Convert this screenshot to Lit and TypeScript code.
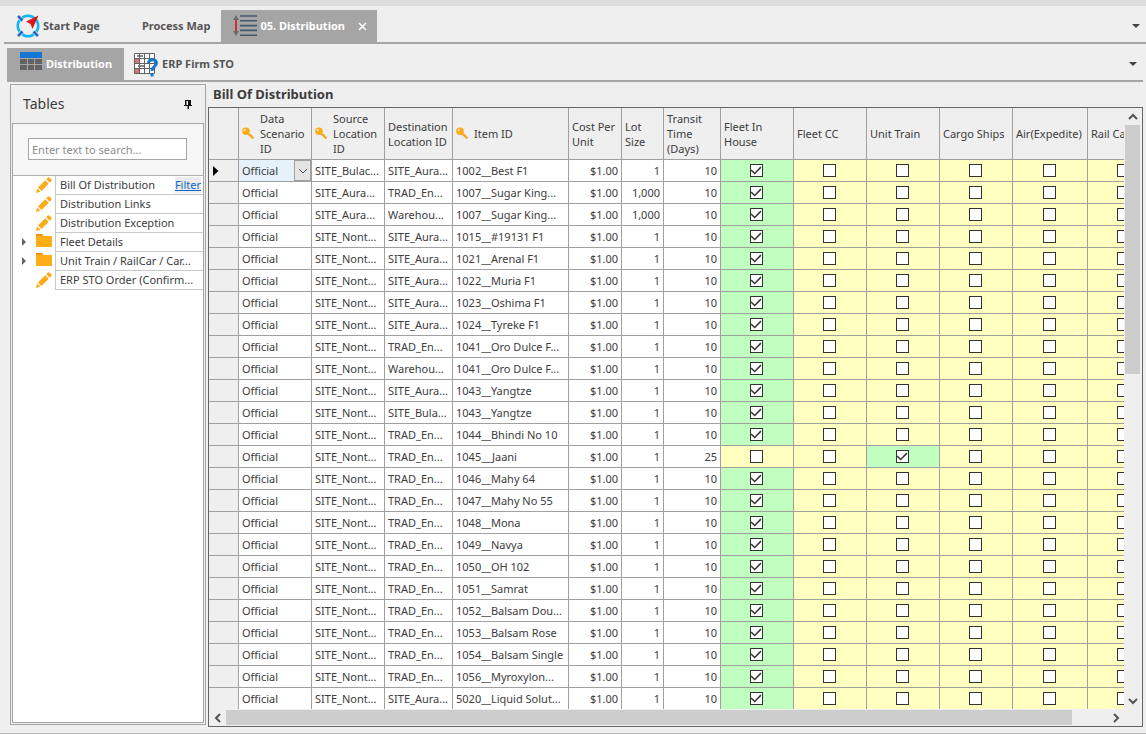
import { LitElement, css, html, nothing, svg } from 'lit';
import { customElement, property } from 'lit/decorators.js';
import { classMap } from 'lit/directives/class-map.js';

interface Column {
  label: string;
  width: number;
  key?: boolean;
}

interface Row {
  source: string;
  destination: string;
  item: string;
  lot: string;
  days: number;
  mode: number;
}

const COLUMNS: Column[] = [
  { label: 'Data Scenario ID', width: 73, key: true },
  { label: 'Source Location ID', width: 73, key: true },
  { label: 'Destination Location ID', width: 68 },
  { label: 'Item ID', width: 116, key: true },
  { label: 'Cost Per Unit', width: 53 },
  { label: 'Lot Size', width: 42 },
  { label: 'Transit Time (Days)', width: 57 },
  { label: 'Fleet In House', width: 73 },
  { label: 'Fleet CC', width: 73 },
  { label: 'Unit Train', width: 73 },
  { label: 'Cargo Ships', width: 73 },
  { label: 'Air(Expedite)', width: 75 },
  { label: 'Rail Ca', width: 73 },
];

const MODES = COLUMNS.slice(7).map((c) => c.label);

const row = (
  source: string,
  destination: string,
  item: string,
  lot = '1',
  days = 10,
  mode = 0,
): Row => ({ source, destination, item, lot, days, mode });

const NONT = 'SITE_Nont...';
const AURA = 'SITE_Aura...';
const TRAD = 'TRAD_En...';
const WARE = 'Warehou...';

const ROWS: Row[] = [
  row('SITE_Bulac...', AURA, '1002__Best F1'),
  row(AURA, TRAD, '1007__Sugar King...', '1,000'),
  row(AURA, WARE, '1007__Sugar King...', '1,000'),
  row(NONT, AURA, '1015__#19131 F1'),
  row(NONT, AURA, '1021__Arenal F1'),
  row(NONT, AURA, '1022__Muria F1'),
  row(NONT, AURA, '1023__Oshima F1'),
  row(NONT, AURA, '1024__Tyreke F1'),
  row(NONT, TRAD, '1041__Oro Dulce F...'),
  row(NONT, WARE, '1041__Oro Dulce F...'),
  row(NONT, AURA, '1043__Yangtze'),
  row(NONT, 'SITE_Bula...', '1043__Yangtze'),
  row(NONT, TRAD, '1044__Bhindi No 10'),
  row(NONT, TRAD, '1045__Jaani', '1', 25, 2),
  row(NONT, TRAD, '1046__Mahy 64'),
  row(NONT, TRAD, '1047__Mahy No 55'),
  row(NONT, TRAD, '1048__Mona'),
  row(NONT, TRAD, '1049__Navya'),
  row(NONT, TRAD, '1050__OH 102'),
  row(NONT, TRAD, '1051__Samrat'),
  row(NONT, TRAD, '1052__Balsam Dou...'),
  row(NONT, TRAD, '1053__Balsam Rose'),
  row(NONT, TRAD, '1054__Balsam Single'),
  row(NONT, TRAD, '1056__Myroxylon...'),
  row(NONT, AURA, '5020__Liquid Solut...'),
];

const TREE = [
  { label: 'Bill Of Distribution', folder: false, filter: true },
  { label: 'Distribution Links', folder: false },
  { label: 'Distribution Exception', folder: false },
  { label: 'Fleet Details', folder: true },
  { label: 'Unit Train / RailCar / Car...', folder: true },
  { label: 'ERP STO Order (Confirm...', folder: false },
];

const compassIcon = html`
  <svg width="24" height="26" viewBox="0 0 24 26">
    <circle cx="12" cy="13" r="10.200" fill="none" stroke="#12b5f5" stroke-width="2.600" />
    <path d="M2 3l3.500 3.500M2 23l3.500-3.500M22 23l-3.500-3.500" stroke="#efefef" stroke-width="4" />
    <path d="M2 3l4.500 4.500M2 23l4.500-4.500M22 23l-4.500-4.500" stroke="#2467c4" stroke-width="2.600" />
    <path d="M22.500 2.500L10 8.500l4.500 2.500 2 5z" fill="#d8161c" />
  </svg>
`;

const linesIcon = html`
  <svg width="24" height="24" viewBox="0 0 24 24">
    <path d="M3 6v12" stroke="#d03030" stroke-width="2" />
    <path d="M3 1l3 5H0zM3 22l3-5H0z" fill="#6b6b6b" />
    <path
      d="M7 2h17M7 6.800h17M7 11.600h17M7 16.400h17M7 21.200h17"
      stroke="#41586d"
      stroke-width="1.600"
    />
  </svg>
`;

const gridIcon = html`
  <svg width="22" height="26" viewBox="0 0 22 26">
    <path d="M0 1h22v6H0z" fill="#1478d4" />
    <path
      d="M0 8h7v5H0zM8 8h6v5H8zM15 8h7v5h-7zM0 14h7v5H0zM8 14h6v5H8zM15 14h7v5h-7z"
      fill="#636363"
    />
  </svg>
`;

const questionGridIcon = html`
  <svg width="24" height="26" viewBox="0 0 24 26">
    <path d="M.5 2.500h20v20H.5z" fill="#fff" />
    <path d="M.5 7.500h5v5h-5zM.5 17.500h5v5h-5z" fill="#dc7474" />
    <path
      d="M.5 2.500h20v20H.5zM5.500 2.500v20M10.500 2.500v20M15.500 2.500v20M.5 7.500h20M.5 12.500h20M.5 17.500h20"
      fill="none"
      stroke="#626262"
    />
    <path d="M3 5h6M4 15h6" stroke="#666" stroke-width="1.600" />
    <path
      d="M14.500 12c0-4.500 8-4.500 8 0 0 3.500-4.500 3.500-4.500 8"
      fill="none"
      stroke="#1478d4"
      stroke-width="3"
    />
    <path d="M16.500 22.500h3v3h-3z" fill="#1478d4" />
  </svg>
`;

const keyIcon = html`
  <svg class="key" width="13" height="13" viewBox="0 0 13 13">
    <path d="M5.500 6l6 5.500M8 9.300l1.500-1.500" stroke="#f5a51b" stroke-width="2.200" />
    <circle cx="4" cy="4.200" r="3.800" fill="#fbab18" />
    <circle cx="2.800" cy="3" r="1" fill="#fff0d0" />
  </svg>
`;

const pencilIcon = html`
  <svg width="16" height="16" viewBox="0 0 16 16" fill="#fbab18">
    <path d="M0 16l1.200-4.500 3.300 3.300z" />
    <path d="M2 10.500l7.200-7.200 3.500 3.500L5.500 14z" />
    <path d="M10.200 2.300l1.500-1.500q1-1 2 0l1.500 1.500q1 1 0 2l-1.500 1.500z" />
  </svg>
`;

const folderIcon = html`
  <svg width="16" height="16" viewBox="0 0 16 16">
    <path d="M0 0h6l1.500 2H16v11H0z" fill="#ffae17" />
    <path d="M0 0h6l1 1.500H0z" fill="#f28a11" />
  </svg>
`;

const pinIcon = html`
  <svg width="8" height="9" viewBox="0 0 8 9">
    <path d="M1 0h6v5h1v1H5v3H3.500V6H0V5h1z" fill="#111" />
    <path d="M2.500 1h1.500v4H2.500z" fill="#efefef" />
  </svg>
`;

const chevrons = {
  up: svg`<path d="M1 7l4-4 4 4" />`,
  down: svg`<path d="M1 3l4 4 4-4" />`,
  left: svg`<path d="M7 1L3 5l4 4" />`,
  right: svg`<path d="M3 1l4 4-4 4" />`,
};

const arrow = (dir: keyof typeof chevrons, stroke = 2) => html`
  <svg
    width="10"
    height="10"
    viewBox="0 0 10 10"
    fill="none"
    stroke="#555"
    stroke-width=${stroke}
  >
    ${chevrons[dir]}
  </svg>
`;

const caret = html`
  <svg width="8" height="4" viewBox="0 0 8 4"><path d="M0 0h8L4 4z" fill="#444" /></svg>
`;

@customElement('tables-panel')
export class TablesPanel extends LitElement {
  static override styles = css`
    :host {
      display: flex;
      flex-direction: column;
      box-sizing: border-box;
      border: 1px solid #a5a5a5;
      padding: 1px;
    }
    header {
      display: flex;
      align-items: center;
      justify-content: space-between;
      box-sizing: border-box;
      height: 37px;
      padding: 0 12px 1px 11px;
    }
    h2 {
      margin: 0;
      font-size: 14px;
      font-weight: 400;
    }
    button {
      display: flex;
      padding: 0;
      border: 0;
      background: none;
    }
    .box {
      flex: 1;
      border: 1px solid #a5a5a5;
      background: #fff;
    }
    .search {
      padding: 14px 16px 15px 15px;
      border-bottom: 1px solid #b0b0b0;
      background: #f6f6f6;
    }
    input {
      display: block;
      box-sizing: border-box;
      width: 100%;
      height: 22px;
      padding: 0 3px;
      border: 1px solid #a5a5a5;
      border-radius: 0;
      background: #fff;
      font: inherit;
      outline: none;
    }
    input::placeholder {
      color: #8c8c8c;
    }
    ul {
      margin: 0;
      padding: 0;
      list-style: none;
    }
    li {
      display: flex;
      height: 19px;
    }
    .gutter {
      display: flex;
      align-items: center;
      justify-content: flex-end;
      gap: 10px;
      box-sizing: border-box;
      width: 42px;
      padding: 0 3px 1px 0;
    }
    .label {
      flex: 1;
      display: flex;
      align-items: center;
      justify-content: space-between;
      min-width: 0;
      padding: 0 2px 0 4px;
      border-left: 1px solid #c8c8c8;
      border-bottom: 1px solid #c8c8c8;
      white-space: nowrap;
    }
    a {
      color: #0a66c8;
      background: #ececec;
    }
  `;

  override render() {
    return html`
      <header>
        <h2>Tables</h2>
        <button aria-label="Pin panel">${pinIcon}</button>
      </header>
      <div class="box">
        <div class="search">
          <input type="text" aria-label="Search tables" placeholder="Enter text to search..." />
        </div>
        <ul>
          ${TREE.map(
            (n) => html`
              <li>
                <span class="gutter">
                  ${n.folder
                    ? html`<button aria-label="Expand">
                        <svg width="4" height="8" viewBox="0 0 4 8">
                          <path d="M0 0l4 4-4 4z" fill="#666" />
                        </svg>
                      </button>`
                    : nothing}
                  ${n.folder ? folderIcon : pencilIcon}
                </span>
                <span class="label">
                  <span>${n.label}</span>
                  ${n.filter ? html`<a href="#filter">Filter</a>` : nothing}
                </span>
              </li>
            `,
          )}
        </ul>
      </div>
    `;
  }
}

@customElement('distribution-grid')
export class DistributionGrid extends LitElement {
  @property({ attribute: false })
  rows: Row[] = [];

  static override styles = css`
    :host {
      display: grid;
      grid-template-columns: minmax(0, 1fr) 15px;
      grid-template-rows: minmax(0, 1fr) 15px;
      gap: 1px;
      box-sizing: border-box;
      padding: 0 2px 1px 0;
      border: 1px solid #666;
      background: #efefef;
    }
    .view {
      overflow: hidden;
      background: #fff;
    }
    table {
      width: 1px;
      table-layout: fixed;
      border-collapse: separate;
      border-spacing: 0;
    }
    .marker {
      width: 30px;
    }
    th,
    td {
      box-sizing: border-box;
      padding: 0 0 0 3px;
      border-right: 1px solid #a0a0a0;
      border-bottom: 1px solid #a0a0a0;
      overflow: hidden;
      text-align: left;
      font-weight: 400;
    }
    th {
      height: 52px;
      background: #efefef;
      line-height: 15px;
    }
    td {
      height: 22px;
      line-height: 16px;
      white-space: nowrap;
    }
    .head {
      display: flex;
      align-items: center;
      gap: 5px;
    }
    .key {
      flex: none;
    }
    td.num {
      padding-right: 3px;
      text-align: right;
    }
    td.mark {
      padding-left: 4px;
      background: #efefef;
    }
    td.mark svg {
      display: block;
    }
    td.flag {
      padding: 0 2px 0 0;
      background: #ffffc0;
    }
    td.flag.on {
      background: #c0ffc0;
    }
    td.edit {
      padding: 0;
    }
    .combo {
      display: flex;
      position: relative;
      height: 21px;
    }
    select {
      flex: 1;
      padding: 0 3px;
      border: 0;
      border-radius: 0;
      appearance: none;
      background: #e5f2fb;
      color: inherit;
      font: inherit;
      outline: none;
    }
    .drop {
      display: flex;
      align-items: center;
      justify-content: center;
      position: absolute;
      inset: 0 0 0 auto;
      box-sizing: border-box;
      width: 17px;
      border: 1px solid #a0a0a0;
      background: #e4e4e4;
      pointer-events: none;
    }
    input {
      display: block;
      box-sizing: border-box;
      width: 13px;
      height: 13px;
      margin: 0 auto;
      border: 1px solid #333;
      appearance: none;
      background: #fff;
    }
    input:checked::after {
      content: '';
      display: block;
      width: 11px;
      height: 11px;
      background: #333;
      clip-path: polygon(0 50%, 10% 42%, 38% 68%, 90% 14%, 100% 24%, 38% 86%);
    }
    .scroll {
      display: flex;
    }
    .scroll.v {
      flex-direction: column;
    }
    .scroll button {
      display: flex;
      align-items: center;
      justify-content: center;
      flex: none;
      width: 17px;
      padding: 0;
      border: 0;
      background: none;
    }
    .scroll.v button {
      width: 15px;
      height: 17px;
    }
    .track {
      flex: 1;
    }
    .thumb {
      background: #cdcdcd;
    }
    .v .thumb {
      height: 44%;
    }
    .h .thumb {
      width: 96%;
      height: 100%;
    }
  `;

  private renderRow(r: Row, index: number) {
    return html`
      <tr>
        <td class="mark">
          ${index === 0
            ? html`<svg width="6" height="10" viewBox="0 0 6 10">
                <path d="M0 0l5.500 5L0 10z" fill="#000" />
              </svg>`
            : nothing}
        </td>
        ${index === 0
          ? html`<td class="edit">
              <div class="combo">
                <select aria-label="Data Scenario ID">
                  <option>Official</option>
                </select>
                <span class="drop">${arrow('down', 1)}</span>
              </div>
            </td>`
          : html`<td>Official</td>`}
        <td>${r.source}</td>
        <td>${r.destination}</td>
        <td>${r.item}</td>
        <td class="num">$1.00</td>
        <td class="num">${r.lot}</td>
        <td class="num">${r.days}</td>
        ${MODES.map(
          (label, i) => html`
            <td class=${classMap({ flag: true, on: r.mode === i })}>
              <input type="checkbox" aria-label=${label} .checked=${r.mode === i} />
            </td>
          `,
        )}
      </tr>
    `;
  }

  override render() {
    return html`
      <div class="view">
        <table>
          <colgroup>
            <col class="marker" />
            ${COLUMNS.map((c) => html`<col style="width: ${c.width}px" />`)}
          </colgroup>
          <thead>
            <tr>
              <th></th>
              ${COLUMNS.map(
                (c) => html`
                  <th>
                    <div class="head">${c.key ? keyIcon : nothing}<span>${c.label}</span></div>
                  </th>
                `,
              )}
            </tr>
          </thead>
          <tbody>
            ${this.rows.map((r, i) => this.renderRow(r, i))}
          </tbody>
        </table>
      </div>
      <div class="scroll v">
        <button aria-label="Scroll up">${arrow('up')}</button>
        <div class="track"><div class="thumb"></div></div>
        <button aria-label="Scroll down">${arrow('down')}</button>
      </div>
      <div class="scroll h">
        <button aria-label="Scroll left">${arrow('left')}</button>
        <div class="track"><div class="thumb"></div></div>
        <button aria-label="Scroll right">${arrow('right')}</button>
      </div>
    `;
  }
}

@customElement('app-root')
export class AppRoot extends LitElement {
  static override styles = css`
    :host {
      display: flex;
      flex-direction: column;
      box-sizing: border-box;
      height: 100vh;
      border-bottom: 1px solid #b8b8b8;
      background: #efefef;
      color: #3c3c3c;
      font-family: 'Noto Sans', 'Open Sans', sans-serif;
      font-size: 11px;
      line-height: 16px;
    }
    .strip {
      flex: none;
      height: 6px;
      background: #dedede;
    }
    nav {
      display: flex;
      align-items: stretch;
      flex: none;
      height: 32px;
      border-bottom: 2px solid #a5a5a5;
    }
    .main-tabs {
      margin: 4px 0 0 4px;
      padding-right: 6px;
    }
    .sub-tabs {
      margin: 4px 3px 0 7px;
      padding-right: 6px;
    }
    nav button {
      display: flex;
      align-items: center;
      border: 0;
      padding: 0 10px;
      background: none;
      color: #555;
      font: inherit;
      font-weight: 700;
    }
    nav button.active {
      background: #a5a5a5;
      color: #fff;
    }
    .main-tabs button {
      gap: 3px;
      padding: 0 10px 0 12px;
    }
    .main-tabs .plain {
      padding: 0 11px 0 32px;
    }
    .sub-tabs button {
      gap: 4px;
      padding: 0 12px 0 10px;
    }
    .sub-tabs button.active {
      padding-left: 13px;
    }
    .close {
      margin-left: 10px;
    }
    nav .more {
      margin-left: auto;
      padding: 0;
    }
    .main-tabs .more {
      padding: 0;
    }
    main {
      display: flex;
      flex: 1;
      gap: 2px;
      min-height: 0;
      padding: 0 3px 6px 10px;
    }
    tables-panel {
      flex: none;
      width: 196px;
      margin: 2px 0;
    }
    section {
      display: flex;
      flex: 1;
      flex-direction: column;
      min-width: 0;
    }
    h1 {
      margin: 0;
      padding-left: 5px;
      font-size: 13px;
      font-weight: 700;
      line-height: 25px;
    }
    distribution-grid {
      flex: 1;
      min-height: 0;
    }
  `;

  override render() {
    return html`
      <div class="strip"></div>
      <nav class="main-tabs">
        <button>${compassIcon}Start Page</button>
        <button class="plain">Process Map</button>
        <button class="active">
          ${linesIcon}05. Distribution
          <svg class="close" width="9" height="9" viewBox="0 0 9 9">
            <path d="M1 1l7 7M8 1L1 8" stroke="#fff" stroke-width="1.500" />
          </svg>
        </button>
        <button class="more" aria-label="More tabs">${caret}</button>
      </nav>
      <nav class="sub-tabs">
        <button class="active">${gridIcon}Distribution</button>
        <button>${questionGridIcon}ERP Firm STO</button>
        <button class="more" aria-label="More views">${caret}</button>
      </nav>
      <main>
        <tables-panel></tables-panel>
        <section>
          <h1>Bill Of Distribution</h1>
          <distribution-grid .rows=${ROWS}></distribution-grid>
        </section>
      </main>
    `;
  }
}

declare global {
  interface HTMLElementTagNameMap {
    'app-root': AppRoot;
    'tables-panel': TablesPanel;
    'distribution-grid': DistributionGrid;
  }
}
